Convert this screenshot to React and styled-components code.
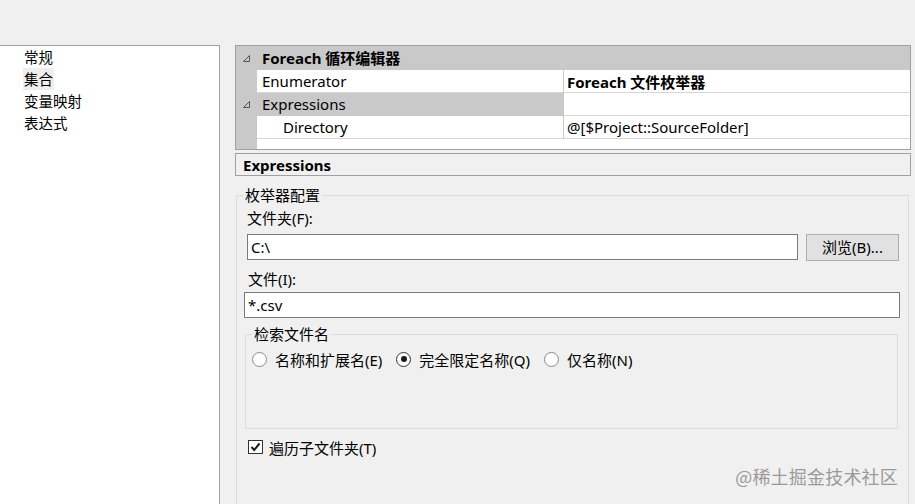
import React from 'react';
import styled, { createGlobalStyle } from 'styled-components';

const Global = createGlobalStyle`
  html, body {
    margin: 0;
    padding: 0;
    background: #f0f0f0;
  }
  body {
    font-family: "Noto Sans", "Noto Sans CJK SC", sans-serif;
    font-size: 15px;
    color: #000;
  }
  * { box-sizing: border-box; }
`

const Page = styled.div`
  position: relative;
  display: flex;
  align-items: stretch;
  height: 504px;
  width: 915px;
  padding-top: 45px;
  overflow: hidden;
  background: #f0f0f0;
`

const Sidebar = styled.nav`
  display: flex;
  flex-direction: column;
  align-items: flex-start;
  width: 220px;
  padding: 0 0 0 23px;
  background: #fff;
  border-top: 1px solid #a0a0a0;
  border-right: 1px solid #a0a0a0;
`

const NavItem = styled.div`
  height: 22px;
  line-height: 22px;
  padding: 0 1px;
  font-size: 14.5px;
  font-family: "Noto Sans CJK SC", sans-serif;
  background: ${p => (p.$active ? '#eeeeee' : 'transparent')};
`

const Main = styled.main`
  display: flex;
  flex-direction: column;
  width: 676px;
  margin-left: 15px;
`

const Grid = styled.div`
  display: flex;
  flex-direction: column;
  height: 105px;
  border: 1px solid #a0a0a0;
  background: #fff;
`

const Row = styled.div`
  display: grid;
  grid-template-columns: 21px 306px 1px 1fr;
  height: ${p => (p.$head ? '24px' : '23px')};
`

const Gutter = styled.div`
  display: flex;
  align-items: center;
  justify-content: center;
  background: #c9c9c9;
`

const NameCell = styled.div`
  display: flex;
  align-items: center;
  padding-left: ${p => (p.$indent ? '26px' : '5px')};
  background: ${p => (p.$category ? '#c9c9c9' : '#fff')};
  border-bottom: 1px solid ${p => (p.$category ? '#c9c9c9' : '#d6d6d6')};
  font-weight: ${p => (p.$bold ? 700 : 400)};
  grid-column: ${p => (p.$span ? '2 / 5' : 'auto')};
  white-space: nowrap;
`

const Divider = styled.div`
  background: #c9c9c9;
`

const ValueCell = styled.div`
  display: flex;
  align-items: center;
  padding-left: 3px;
  border-bottom: 1px solid #d6d6d6;
  font-weight: ${p => (p.$bold ? 700 : 400)};
  white-space: nowrap;
`

const Filler = styled.div`
  flex: 1;
  display: grid;
  grid-template-columns: 21px 1fr;
`

const DescBar = styled.div`
  height: 23px;
  margin-top: 3px;
  padding: 0 0 0 7px;
  border: 1px solid #a0a0a0;
  font-weight: 700;
  line-height: 22px;
  overflow: hidden;
`

const Group = styled.fieldset`
  flex: 1;
  margin: 11px 2px -20px 1px;
  padding: 6px 8px 0 10px;
  border: 1px solid #dcdcdc;
  min-width: 0;
`

const Legend = styled.legend`
  margin-left: ${p => p.$offset};
  padding: 0 2px;
  height: 16px;
  line-height: 16px;
`

const FieldLabel = styled.div`
  height: 18px;
  line-height: 18px;
  margin: ${p => p.$margin || '0'};
`

const InputRow = styled.div`
  display: flex;
  align-items: flex-start;
  gap: 8px;
  margin: ${p => p.$margin};
`

const TextBox = styled.div`
  display: flex;
  align-items: center;
  width: ${p => p.$width};
  height: 26px;
  padding-left: 3px;
  background: #fff;
  border: 1px solid #7a7a7a;
`

const Button = styled.div`
  display: flex;
  align-items: center;
  justify-content: center;
  width: 93px;
  height: 27px;
  padding-bottom: 2px;
  background: #e1e1e1;
  border: 1px solid #adadad;
`

const InnerGroup = styled.fieldset`
  height: 103px;
  margin: 8px 2px 0 -2px;
  padding: 7px 0 0 6px;
  border: 1px solid #dcdcdc;
  min-width: 0;
`

const RadioRow = styled.div`
  display: flex;
  align-items: center;
  height: 20px;
`

const RadioOption = styled.label`
  display: flex;
  align-items: center;
  gap: 8px;
  margin-right: 14px;
`

const RadioDot = styled.span`
  position: relative;
  width: 15px;
  height: 15px;
  border-radius: 50%;
  border: 1px solid ${p => (p.$checked ? '#333' : '#8a8a8a')};
  background: #fff;
  &::after {
    content: '';
    display: ${p => (p.$checked ? 'block' : 'none')};
    position: absolute;
    left: 3.5px;
    top: 3.5px;
    width: 6px;
    height: 6px;
    border-radius: 50%;
    background: #1a1a1a;
  }
`

const CheckRow = styled.label`
  display: flex;
  align-items: center;
  gap: 6px;
  margin: 8px 0 0 1px;
  height: 20px;
`

const CheckBox = styled.span`
  display: flex;
  align-items: center;
  justify-content: center;
  width: 15px;
  height: 14px;
  border: 1px solid #333;
  background: #fff;
`

const Watermark = styled.div`
  position: absolute;
  right: 17px;
  top: 463px;
  font-size: 18px;
  color: #9a9a9a;
  font-family: "Noto Sans CJK SC", sans-serif;
  letter-spacing: 0.2px;
`

const Expander = () => (
  <svg width="7" height="7" viewBox="0 0 7 7">
    <path d="M6.5 0.5 L6.5 6.5 L0.5 6.5 Z" fill="none" stroke="#555" strokeWidth="1" />
  </svg>
)

export default function App() {
  return (
    <>
      <Global />
      <Page>
        <Sidebar>
          <NavItem>常规</NavItem>
          <NavItem $active>集合</NavItem>
          <NavItem>变量映射</NavItem>
          <NavItem>表达式</NavItem>
        </Sidebar>

        <Main>
          <Grid>
            <Row $head>
              <Gutter><Expander /></Gutter>
              <NameCell $category $bold $span>Foreach 循环编辑器</NameCell>
            </Row>
            <Row>
              <Gutter />
              <NameCell>Enumerator</NameCell>
              <Divider />
              <ValueCell $bold>Foreach 文件枚举器</ValueCell>
            </Row>
            <Row>
              <Gutter><Expander /></Gutter>
              <NameCell $category>Expressions</NameCell>
              <Divider />
              <ValueCell />
            </Row>
            <Row>
              <Gutter />
              <NameCell $indent>Directory</NameCell>
              <Divider />
              <ValueCell>@[$Project::SourceFolder]</ValueCell>
            </Row>
            <Filler>
              <Gutter />
            </Filler>
          </Grid>

          <DescBar>Expressions</DescBar>

          <Group>
            <Legend $offset="-4px">枚举器配置</Legend>
            <FieldLabel>文件夹(F):</FieldLabel>
            <InputRow $margin="7px 0 0 0">
              <TextBox $width="551px">C:\</TextBox>
              <Button>浏览(B)...</Button>
            </InputRow>
            <FieldLabel $margin="9px 0 0 1px">文件(I):</FieldLabel>
            <InputRow $margin="4px 0 0 -3px">
              <TextBox $width="658px">*.csv</TextBox>
            </InputRow>

            <InnerGroup>
              <Legend $offset="0px">检索文件名</Legend>
              <RadioRow>
                <RadioOption><RadioDot />名称和扩展名(E)</RadioOption>
                <RadioOption><RadioDot $checked />完全限定名称(Q)</RadioOption>
                <RadioOption><RadioDot />仅名称(N)</RadioOption>
              </RadioRow>
            </InnerGroup>

            <CheckRow>
              <CheckBox>
                <svg width="11" height="10" viewBox="0 0 11 10">
                  <path d="M1.5 5 L4.2 8 L9.5 1.5" fill="none" stroke="#1a1a1a" strokeWidth="2" />
                </svg>
              </CheckBox>
              遍历子文件夹(T)
            </CheckRow>
          </Group>
        </Main>

        <Watermark>@稀土掘金技术社区</Watermark>
      </Page>
    </>
  );
}
